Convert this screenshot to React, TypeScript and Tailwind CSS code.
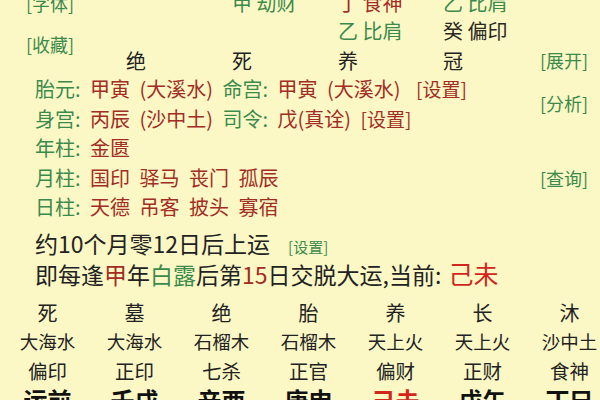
import React from 'react';

const green = 'text-[#3b8a4c]';
const red = 'text-[#a22d24]';

const Label = ({ k, v }: { k: string; v: React.ReactNode }) => (
  <span>
    <span className={green}>{k}: </span>
    <span className={red}>{v}</span>
  </span>
);

const topCols: { stage: string; lines: [React.ReactNode, React.ReactNode] }[] = [
  { stage: '绝', lines: ['', ''] },
  { stage: '死', lines: [<span className={green}>甲 劫财</span>, ''] },
  {
    stage: '养',
    lines: [<span className={red}>丁 食神</span>, <span className={green}>乙 比肩</span>],
  },
  {
    stage: '冠',
    lines: [<span className={green}>乙 比肩</span>, <span className="text-[#2a2620]">癸 偏印</span>],
  },
];

const luck = [
  { stage: '死', nayin: '大海水', god: '偏印', gz: '运前' },
  { stage: '墓', nayin: '大海水', god: '正印', gz: '壬戌' },
  { stage: '绝', nayin: '石榴木', god: '七杀', gz: '辛酉' },
  { stage: '胎', nayin: '石榴木', god: '正官', gz: '庚申' },
  { stage: '养', nayin: '天上火', god: '偏财', gz: '己未', current: true },
  { stage: '长', nayin: '天上火', god: '正财', gz: '戊午' },
  { stage: '沐', nayin: '沙中土', god: '食神', gz: '丁巳' },
];

export default function App() {
  return (
    <div
      className="w-[600px] h-[400px] overflow-hidden bg-[#fbf8c6] text-[#222]"
      style={{ fontFamily: '"Noto Sans CJK SC", "Noto Sans", sans-serif' }}
    >
      <div className="flex">
        <div className="w-[533px]">
          {/* hidden stems + stages */}
          <div className="flex -mt-[11px]">
            <div className="w-[126px] pl-[26px] text-[18px]">
              <div className={`h-[28px] leading-[28px] ${green}`}>[字体]</div>
              <div className={`mt-[13px] h-[28px] leading-[28px] ${green}`}>[收藏]</div>
            </div>
            <div className="grid grid-cols-[106px_106px_105px_90px] text-[20px]">
              {topCols.map((c, i) => (
                <div key={i} className="flex flex-col">
                  <div className="h-[28px] leading-[28px] whitespace-nowrap">{c.lines[0]}</div>
                  <div className="h-[28px] leading-[28px] whitespace-nowrap">{c.lines[1]}</div>
                  <div className="h-[28px] leading-[28px] mt-[2px]">{c.stage}</div>
                </div>
              ))}
            </div>
          </div>

          {/* info rows */}
          <div className="pl-[35px] -mt-[1px] text-[20px] whitespace-nowrap [word-spacing:5px]">
            <div className="h-[29.5px] leading-[29.5px]">
              <Label k="胎元" v="甲寅 (大溪水)" /> <Label k="命宫" v="甲寅 (大溪水)" />{' '}
              <span className={`${red} text-[19px] ml-[6px]`}>[设置]</span>
            </div>
            <div className="h-[29.5px] leading-[29.5px]">
              <Label k="身宫" v="丙辰 (沙中土)" /> <Label k="司令" v="戊(真诠)" />{' '}
              <span className={`${red} text-[19px]`}>[设置]</span>
            </div>
            <div className="h-[29.5px] leading-[29.5px]">
              <Label k="年柱" v="金匮" />
            </div>
            <div className="h-[29.5px] leading-[29.5px]">
              <Label k="月柱" v="国印 驿马 丧门 孤辰" />
            </div>
            <div className="h-[29.5px] leading-[29.5px]">
              <Label k="日柱" v="天德 吊客 披头 寡宿" />
            </div>
            <div className="mt-[6px] h-[30px] leading-[30px] text-[23px] [word-spacing:0px]">
              约10个月零12日后上运
              <span className={`${green} text-[15px] ml-[18px]`}>[设置]</span>
            </div>
            <div className="h-[30px] leading-[30px] text-[23px] [word-spacing:0px]">
              即每逢<span className={red}>甲</span>年<span className={green}>白露</span>后第
              <span className={red}>15</span>日交脱大运,当前:{' '}
              <span className="text-[#d0261c] text-[25px] ml-[2px]">己未</span>
            </div>
          </div>
        </div>

        <div className={`flex-1 pl-[7px] text-[18px] ${green}`}>
          <div className="mt-[46px] h-[28px] leading-[28px]">[展开]</div>
          <div className="mt-[15px] h-[28px] leading-[28px]">[分析]</div>
          <div className="mt-[47px] h-[28px] leading-[28px]">[查询]</div>
        </div>
      </div>

      {/* luck pillars */}
      <div className="grid grid-cols-[repeat(7,87px)] ml-[4px] mt-[10px] text-center whitespace-nowrap">
        {luck.map((l, i) => (
          <div key={i} className="flex flex-col items-center">
            <div className="h-[29px] leading-[29px] text-[20px]">{l.stage}</div>
            <div className="h-[29px] leading-[29px] text-[18.5px]">{l.nayin}</div>
            <div className="h-[29px] leading-[29px] text-[19.5px]">{l.god}</div>
            <div
              className={`h-[30px] leading-[30px] text-[24px] font-bold ${
                l.current ? 'text-[#d0261c]' : 'text-[#111]'
              }`}
            >
              {l.gz}
            </div>
          </div>
        ))}
      </div>
    </div>
  );
}
